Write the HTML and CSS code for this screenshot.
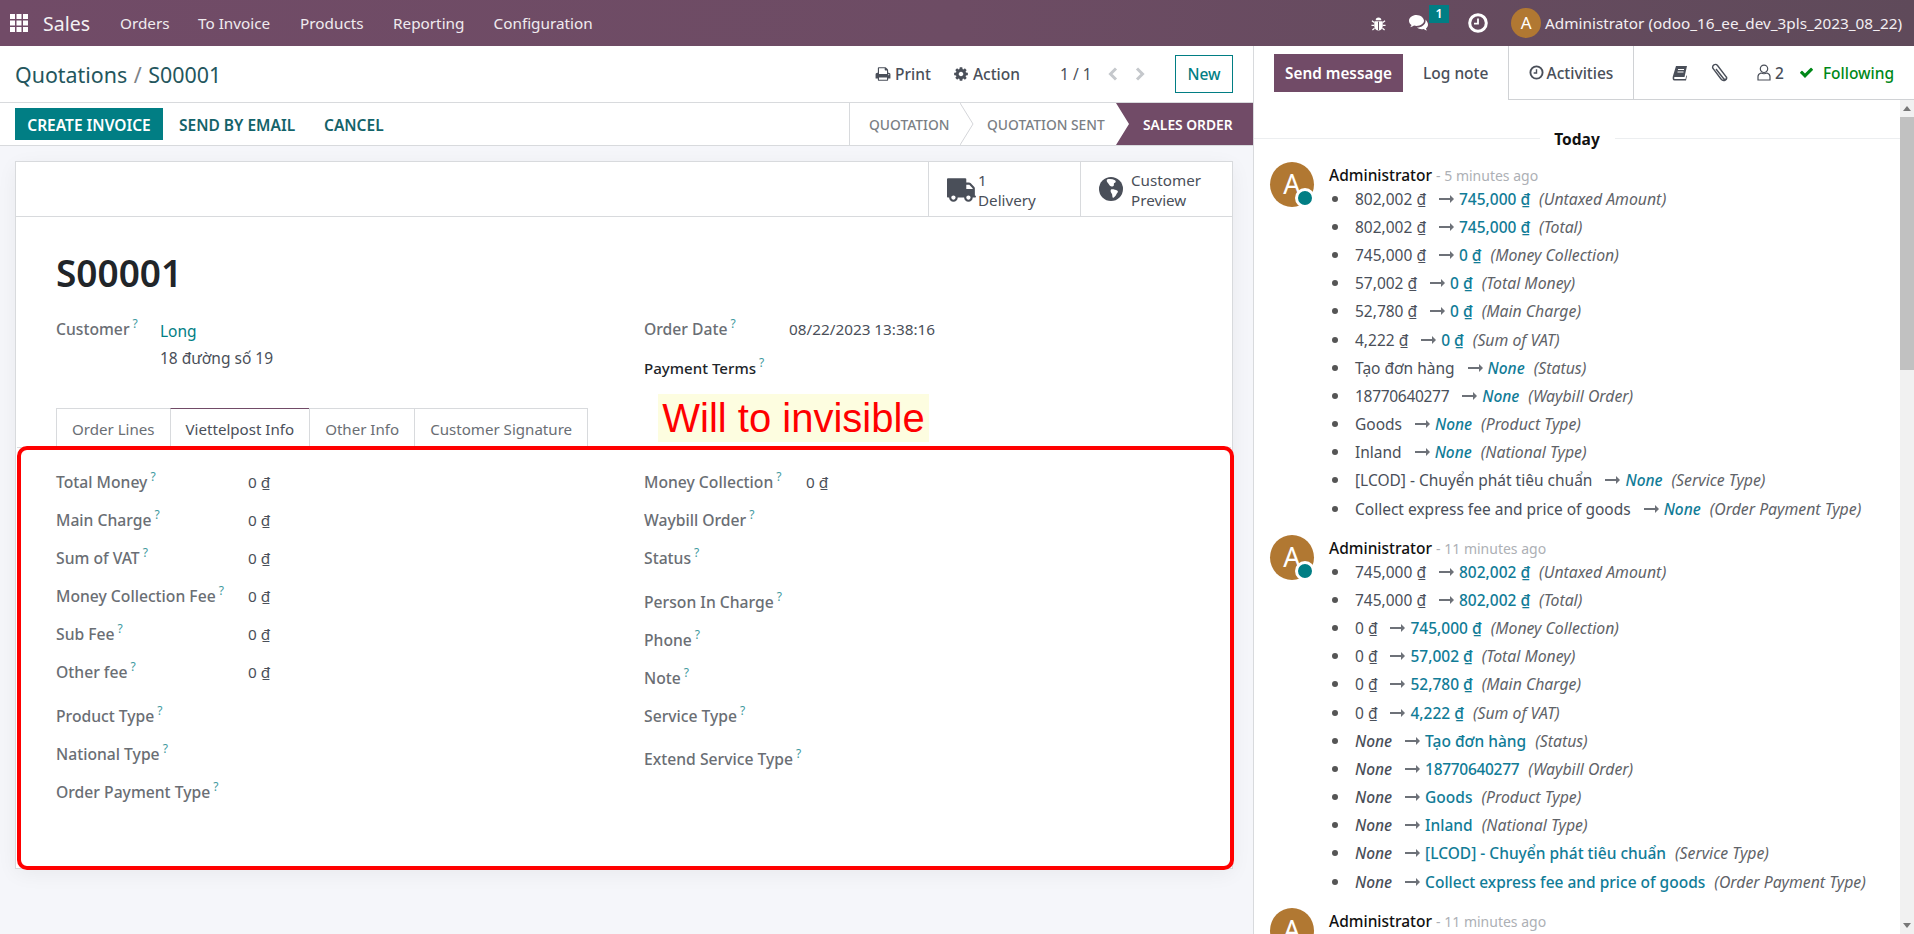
FILE: index.html
```html
<!DOCTYPE html>
<html lang="en">
<head>
<meta charset="utf-8">
<title>S00001 - Odoo</title>
<link rel="stylesheet" href="styles.css">
</head>
<body>
<header class="nav">
  <svg class="i-apps" viewBox="0 0 18 18"><g fill="#fff"><rect width="5" height="5"/><rect x="6.5" width="5" height="5"/><rect x="13" width="5" height="5"/><rect y="6.5" width="5" height="5"/><rect x="6.5" y="6.5" width="5" height="5"/><rect x="13" y="6.5" width="5" height="5"/><rect y="13" width="5" height="5"/><rect x="6.5" y="13" width="5" height="5"/><rect x="13" y="13" width="5" height="5"/></g></svg>
  <span class="brand">Sales</span>
  <a class="nav-a nav-orders">Orders</a>
  <a class="nav-a nav-inv">To Invoice</a>
  <a class="nav-a nav-prod">Products</a>
  <a class="nav-a nav-rep">Reporting</a>
  <a class="nav-a">Configuration</a>
  <div class="nav-right">
    <svg class="i-bug" viewBox="0 0 16 16"><path fill="#fff" d="M5 4.500a3 3 0 0 1 6 0zM4.400 5.500h7.200c.5 0 .9.4.9.9V11a4.500 4.500 0 0 1-9 0V6.400c0-.5.4-.9.9-.9z"/><path stroke="#fff" stroke-width="1.300" fill="none" d="M3.500 7 1 5M12.500 7 15 5M3.500 10H.5M12.500 10h3M3.800 13 1.500 15M12.200 13l2.300 2"/><path stroke="#604a5b" d="M8 6v9"/></svg>
    <span class="chat-wrap">
      <svg class="i-chat" viewBox="0 0 21 18"><path fill="#fff" d="M7.500 1C3.400 1 0 3.500 0 6.700c0 1.700 1 3.300 2.500 4.300-.3.900-.8 1.700-1.400 2.300 1.500-.2 2.900-.8 4-1.700.8.200 1.600.3 2.400.3 4.100 0 7.500-2.500 7.500-5.200S11.600 1 7.500 1z"/><path fill="#fff" d="M16.500 5.500c.1.400.1.800.1 1.200 0 3.800-3.800 6.700-8.600 6.900 1.200 1 2.900 1.600 4.700 1.600.7 0 1.400-.1 2-.2.9.8 2.100 1.300 3.300 1.500-.5-.6-.9-1.300-1.100-2 1.300-.9 2.100-2.200 2.100-3.700 0-2-1.200-3.600-2.500-5.300z"/></svg>
      <span class="badge">1</span>
    </span>
    <svg class="i-clock-nav" viewBox="0 0 20 20"><circle cx="10" cy="10" r="8.300" fill="none" stroke="#fff" stroke-width="3"/><path d="M10 5.500V10.700H6" fill="none" stroke="#fff" stroke-width="1.800"/></svg>
    <span class="nav-av">A</span>
    <span class="nav-user">Administrator (odoo_16_ee_dev_3pls_2023_08_22)</span>
  </div>
</header>

<div class="main">
  <section class="left">
    <div class="cp">
      <div class="crumb">Quotations <span class="sl">/</span> S00001</div>
      <div class="cp-actions">
        <span class="cp-btn"><svg class="i-sm" viewBox="0 0 1792 1792"><path fill="#4a4f59" d="M448 1536h896v-256h-896v256zm0-640h896v-384h-160q-40 0-68-28t-28-68v-160h-640v640zm1152 64q0-26-19-45t-45-19-45 19-19 45 19 45 45 19 45-19 19-45zm128 0v416q0 13-9.500 22.500t-22.500 9.500h-224v160q0 40-28 68t-68 28h-960q-40 0-68-28t-28-68v-160h-224q-13 0-22.500-9.500t-9.500-22.500v-416q0-79 56.500-135.500t135.500-56.500h64v-544q0-40 28-68t68-28h672q40 0 88 20t76 48l152 152q28 28 48 76t20 88v256h64q79 0 135.500 56.500t56.500 135.500z"/></svg>Print</span>
        <span class="cp-btn cp-action"><svg class="i-sm" viewBox="0 0 1792 1792"><path fill="#4a4f59" d="M1152 896q0-106-75-181t-181-75-181 75-75 181 75 181 181 75 181-75 75-181zm512-109v222q0 12-8 23t-20 13l-185 28q-19 54-39 91 35 50 107 138 10 12 10 25t-9 23q-27 37-99 108t-94 71q-12 0-26-9l-138-108q-44 23-91 38-16 136-29 186-7 28-36 28h-222q-14 0-24.500-8.500t-11.500-21.500l-28-184q-49-16-90-37l-141 107q-10 9-25 9-14 0-25-11-126-114-165-168-7-10-7-23 0-12 8-23 15-21 51-66.500t54-70.500q-27-50-41-99l-183-27q-13-2-21-12.500t-8-23.500v-222q0-12 8-23t19-13l186-28q14-46 39-92-40-57-107-138-10-12-10-24 0-10 9-23 26-36 98.500-107.500t94.500-71.500q13 0 26 10l138 107q44-23 91-38 16-136 29-186 7-28 36-28h222q14 0 24.500 8.500t11.500 21.500l28 184q49 16 90 37l142-107q9-9 24-9 13 0 25 10 129 119 165 170 7 8 7 22 0 12-8 23-15 21-51 66.500t-54 70.500q26 50 41 98l183 28q13 2 21 12.500t8 23.500z"/></svg>Action</span>
        <span class="pager">1 / 1</span>
        <svg class="i-chev" viewBox="0 0 10 14"><path d="M8 1.500 2.500 7 8 12.500" fill="none" stroke="#c5c8cc" stroke-width="3"/></svg>
        <svg class="i-chev i-chev-r" viewBox="0 0 10 14"><path d="M2 1.500 7.500 7 2 12.500" fill="none" stroke="#c5c8cc" stroke-width="3"/></svg>
        <span class="btn-new">New</span>
      </div>
    </div>

    <div class="sb">
      <span class="btn-primary">CREATE INVOICE</span>
      <span class="btn-link b-send">SEND BY EMAIL</span>
      <span class="btn-link b-cancel">CANCEL</span>
      <div class="status">
        <span class="st st-1">QUOTATION</span>
        <svg class="st-ch" viewBox="0 0 14 42"><path d="M0 0 13 21 0 42" fill="none" stroke="#d4d6d9"/></svg>
        <span class="st st-2">QUOTATION SENT</span>
        <span class="st-cur">SALES ORDER</span>
      </div>
    </div>

    <div class="form-view">
      <div class="sheet">
        <div class="btnbox">
          <div class="sbtn">
            <svg class="i-truck" viewBox="0 0 1792 1792"><path fill="#4a4f59" transform="matrix(-1 0 0 1 1792 0)" d="M640 1408q0-52-38-90t-90-38-90 38-38 90 38 90 90 38 90-38 38-90zm-384-512h384v-256h-158q-13 0-22 9l-195 195q-9 9-9 22v30zm1280 512q0-52-38-90t-90-38-90 38-38 90 38 90 90 38 90-38 38-90zm256-1088v1024q0 15-4 26.500t-13.500 18.500-16.500 11.500-23.500 6-22.500 2-25.500 0-22.500-.5q0 106-75 181t-181 75-181-75-75-181h-384q0 106-75 181t-181 75-181-75-75-181h-64q-3 0-22.500.5t-25.500 0-22.500-2-23.500-6-16.500-11.500-13.500-18.500-4-26.500q0-26 19-45t45-19v-320q0-8-.5-35t0-38 2.500-34.500 6.500-37 14-30.500 22.500-30l198-198q19-19 50.500-32t58.500-13h160v-192q0-26 19-45t45-19h1024q26 0 45 19t19 45z"/></svg>
            <span class="sbtn-t"><span>1</span><span>Delivery</span></span>
          </div>
          <div class="sbtn">
            <svg class="i-globe" viewBox="0 0 24 24"><circle cx="12" cy="12" r="12" fill="#4a4f59"/><path fill="#fff" d="M8 2.500c2.500-.8 5.500-.5 8 .8 1.500 1.200.5 2.700-1 2.900-.5 1.300.5 2.200-1 3-2 1-3.500-.8-4.500-2.500C8.500 5.500 7 4 8 2.500zM12 12.500c2-.5 4 .2 6.500 1.200 1 .8 0 2-1 3.200-.5 1.500-2 3.200-3.500 4-1-1.200-.5-2.800-1-4-1-1.200-2-2.800-1-4.400z"/></svg>
            <span class="sbtn-t"><span>Customer</span><span>Preview</span></span>
          </div>
        </div>
        <div class="sheet-body">
          <h1 class="title">S00001</h1>
          <div class="group">
            <div class="g-col">
              <div class="cust">
                <span class="lbl lbl-cust">Customer<sup>?</sup></span>
                <div class="cust-v"><a class="link">Long</a><span>18 đường số 19</span></div>
              </div>
            </div>
            <div class="g-col">
              <div class="row"><span class="lbl lbl-date">Order Date<sup>?</sup></span><span class="val">08/22/2023 13:38:16</span></div>
              <div class="row row-pay"><span class="lbl lbl-strong">Payment Terms<sup>?</sup></span></div>
            </div>
          </div>
          <ul class="tabs">
            <li class="tab">Order Lines</li>
            <li class="tab tab-on">Viettelpost Info</li>
            <li class="tab">Other Info</li>
            <li class="tab">Customer Signature</li>
          </ul>
          <div class="group tab-pane">
            <div class="g-col">
              <div class="row"><span class="lbl lbl-w">Total Money<sup>?</sup></span><span class="val">0 ₫</span></div>
              <div class="row"><span class="lbl lbl-w">Main Charge<sup>?</sup></span><span class="val">0 ₫</span></div>
              <div class="row"><span class="lbl lbl-w">Sum of VAT<sup>?</sup></span><span class="val">0 ₫</span></div>
              <div class="row"><span class="lbl lbl-w">Money Collection Fee<sup>?</sup></span><span class="val">0 ₫</span></div>
              <div class="row"><span class="lbl lbl-w">Sub Fee<sup>?</sup></span><span class="val">0 ₫</span></div>
              <div class="row"><span class="lbl lbl-w">Other fee<sup>?</sup></span><span class="val">0 ₫</span></div>
              <div class="row row-gap6"><span class="lbl lbl-w">Product Type<sup>?</sup></span></div>
              <div class="row"><span class="lbl lbl-w">National Type<sup>?</sup></span></div>
              <div class="row"><span class="lbl lbl-w">Order Payment Type<sup>?</sup></span></div>
            </div>
            <div class="g-col">
              <div class="row"><span class="lbl lbl-mc">Money Collection<sup>?</sup></span><span class="val">0 ₫</span></div>
              <div class="row"><span class="lbl">Waybill Order<sup>?</sup></span></div>
              <div class="row"><span class="lbl">Status<sup>?</sup></span></div>
              <div class="row row-gap6"><span class="lbl">Person In Charge<sup>?</sup></span></div>
              <div class="row"><span class="lbl">Phone<sup>?</sup></span></div>
              <div class="row"><span class="lbl">Note<sup>?</sup></span></div>
              <div class="row"><span class="lbl">Service Type<sup>?</sup></span></div>
              <div class="row row-gap5"><span class="lbl">Extend Service Type<sup>?</sup></span></div>
            </div>
          </div>
        </div>
      </div>
      <div class="anno-box"></div>
      <div class="anno-text">Will to invisible</div>
    </div>
  </section>

  <aside class="chatter">
    <div class="ch-top">
      <div class="ch-tabs">
        <span class="send">Send message</span>
        <span class="lognote">Log note</span>
      </div>
      <div class="ch-act"><svg class="i-clk" viewBox="0 0 16 16"><circle cx="8" cy="8" r="6.500" fill="none" stroke="#4a4f59" stroke-width="2"/><path d="M8 4.500V8.500H5" fill="none" stroke="#4a4f59" stroke-width="1.500"/></svg>Activities</div>
      <div class="ch-tools">
        <svg class="i-book" viewBox="0 0 16 16"><path fill="#4a4f59" d="M4 1h11l-2.500 11H2.800c-.9 0-.9 2 0 2h10.700l.8-3.500.7.300-1 4.700H2.500C.6 15.500.4 13.500.8 11.500zM6 4v1h6V4zM5.500 6.500v1h6v-1z"/></svg>
        <svg class="i-clip" viewBox="0 0 18 20"><path fill="none" stroke="#4a4f59" stroke-width="1.400" d="M5 6l7.500 9.500c1.500 2 4 .3 2.700-1.700L6.500 2.500C4.500 0 .5 2.300 2 5.500l8 10.500c2.300 3 6.500 1 5.500-2"/></svg>
        <svg class="i-user" viewBox="0 0 14 17"><circle cx="7" cy="4.800" r="3.700" fill="none" stroke="#4a4f59" stroke-width="1.200"/><path d="M1 16v-3.500C1 10.500 2.500 9.500 4 9c2 1 4 1 6 0 1.500.5 3 1.500 3 3.500V16z" fill="none" stroke="#4a4f59" stroke-width="1.200"/></svg>
        <span class="cnt">2</span>
        <svg class="i-check" viewBox="0 0 1792 1792"><path fill="#008818" d="M1671 566q0 40-28 68l-724 724-136 136q-28 28-68 28t-68-28l-136-136-362-362q-28-28-28-68t28-68l136-136q28-28 68-28t68 28l294 295 656-657q28-28 68-28t68 28l136 136q28 28 28 68z"/></svg>
        <span class="following">Following</span>
      </div>
    </div>
    <div class="ch-body">
      <div class="ch-scroll">
        <div class="today"><span>Today</span></div>

        <article class="msg">
          <div class="av">A<i></i></div>
          <div class="msg-c">
            <div class="who"><b>Administrator</b> <span>- 5 minutes ago</span></div>
            <ul class="tr">
              <li><span>802,002 ₫</span><svg class="arr" viewBox="0 0 15 8"><path d="M0 3h11V0l4 4-4 4V5H0z"/></svg><em>745,000 ₫</em><i>(Untaxed Amount)</i></li>
              <li><span>802,002 ₫</span><svg class="arr" viewBox="0 0 15 8"><path d="M0 3h11V0l4 4-4 4V5H0z"/></svg><em>745,000 ₫</em><i>(Total)</i></li>
              <li><span>745,000 ₫</span><svg class="arr" viewBox="0 0 15 8"><path d="M0 3h11V0l4 4-4 4V5H0z"/></svg><em>0 ₫</em><i>(Money Collection)</i></li>
              <li><span>57,002 ₫</span><svg class="arr" viewBox="0 0 15 8"><path d="M0 3h11V0l4 4-4 4V5H0z"/></svg><em>0 ₫</em><i>(Total Money)</i></li>
              <li><span>52,780 ₫</span><svg class="arr" viewBox="0 0 15 8"><path d="M0 3h11V0l4 4-4 4V5H0z"/></svg><em>0 ₫</em><i>(Main Charge)</i></li>
              <li><span>4,222 ₫</span><svg class="arr" viewBox="0 0 15 8"><path d="M0 3h11V0l4 4-4 4V5H0z"/></svg><em>0 ₫</em><i>(Sum of VAT)</i></li>
              <li><span>Tạo đơn hàng</span><svg class="arr" viewBox="0 0 15 8"><path d="M0 3h11V0l4 4-4 4V5H0z"/></svg><em class="none">None</em><i>(Status)</i></li>
              <li><span class="digits">18770640277</span><svg class="arr" viewBox="0 0 15 8"><path d="M0 3h11V0l4 4-4 4V5H0z"/></svg><em class="none">None</em><i>(Waybill Order)</i></li>
              <li><span>Goods</span><svg class="arr" viewBox="0 0 15 8"><path d="M0 3h11V0l4 4-4 4V5H0z"/></svg><em class="none">None</em><i>(Product Type)</i></li>
              <li><span>Inland</span><svg class="arr" viewBox="0 0 15 8"><path d="M0 3h11V0l4 4-4 4V5H0z"/></svg><em class="none">None</em><i>(National Type)</i></li>
              <li><span>[LCOD] - Chuyển phát tiêu chuẩn</span><svg class="arr" viewBox="0 0 15 8"><path d="M0 3h11V0l4 4-4 4V5H0z"/></svg><em class="none">None</em><i>(Service Type)</i></li>
              <li><span>Collect express fee and price of goods</span><svg class="arr" viewBox="0 0 15 8"><path d="M0 3h11V0l4 4-4 4V5H0z"/></svg><em class="none">None</em><i>(Order Payment Type)</i></li>
            </ul>
          </div>
        </article>

        <article class="msg">
          <div class="av">A<i></i></div>
          <div class="msg-c">
            <div class="who"><b>Administrator</b> <span>- 11 minutes ago</span></div>
            <ul class="tr">
              <li><span>745,000 ₫</span><svg class="arr" viewBox="0 0 15 8"><path d="M0 3h11V0l4 4-4 4V5H0z"/></svg><em>802,002 ₫</em><i>(Untaxed Amount)</i></li>
              <li><span>745,000 ₫</span><svg class="arr" viewBox="0 0 15 8"><path d="M0 3h11V0l4 4-4 4V5H0z"/></svg><em>802,002 ₫</em><i>(Total)</i></li>
              <li><span>0 ₫</span><svg class="arr" viewBox="0 0 15 8"><path d="M0 3h11V0l4 4-4 4V5H0z"/></svg><em>745,000 ₫</em><i>(Money Collection)</i></li>
              <li><span>0 ₫</span><svg class="arr" viewBox="0 0 15 8"><path d="M0 3h11V0l4 4-4 4V5H0z"/></svg><em>57,002 ₫</em><i>(Total Money)</i></li>
              <li><span>0 ₫</span><svg class="arr" viewBox="0 0 15 8"><path d="M0 3h11V0l4 4-4 4V5H0z"/></svg><em>52,780 ₫</em><i>(Main Charge)</i></li>
              <li><span>0 ₫</span><svg class="arr" viewBox="0 0 15 8"><path d="M0 3h11V0l4 4-4 4V5H0z"/></svg><em>4,222 ₫</em><i>(Sum of VAT)</i></li>
              <li><span class="none">None</span><svg class="arr" viewBox="0 0 15 8"><path d="M0 3h11V0l4 4-4 4V5H0z"/></svg><em>Tạo đơn hàng</em><i>(Status)</i></li>
              <li><span class="none">None</span><svg class="arr" viewBox="0 0 15 8"><path d="M0 3h11V0l4 4-4 4V5H0z"/></svg><em class="digits">18770640277</em><i>(Waybill Order)</i></li>
              <li><span class="none">None</span><svg class="arr" viewBox="0 0 15 8"><path d="M0 3h11V0l4 4-4 4V5H0z"/></svg><em>Goods</em><i>(Product Type)</i></li>
              <li><span class="none">None</span><svg class="arr" viewBox="0 0 15 8"><path d="M0 3h11V0l4 4-4 4V5H0z"/></svg><em>Inland</em><i>(National Type)</i></li>
              <li><span class="none">None</span><svg class="arr" viewBox="0 0 15 8"><path d="M0 3h11V0l4 4-4 4V5H0z"/></svg><em>[LCOD] - Chuyển phát tiêu chuẩn</em><i>(Service Type)</i></li>
              <li><span class="none">None</span><svg class="arr" viewBox="0 0 15 8"><path d="M0 3h11V0l4 4-4 4V5H0z"/></svg><em>Collect express fee and price of goods</em><i>(Order Payment Type)</i></li>
            </ul>
          </div>
        </article>

        <article class="msg">
          <div class="av">A<i></i></div>
          <div class="msg-c">
            <div class="who"><b>Administrator</b> <span>- 11 minutes ago</span></div>
          </div>
        </article>
      </div>
      <div class="scrollbar">
        <svg class="sb-up" viewBox="0 0 8 5"><path d="M4 0 8 5H0z"/></svg>
        <div class="thumb"></div>
        <svg class="sb-down" viewBox="0 0 8 5"><path d="M0 0h8L4 5z"/></svg>
      </div>
    </div>
  </aside>
</div>
</body>
</html>
```
FILE: styles.css
```css
* { box-sizing: border-box; }
html, body { margin: 0; height: 934px; overflow: hidden; }
body { font-family: "Noto Sans", sans-serif; font-size: 15.5px; color: #4a4f59; background: #fff; }
svg { display: block; flex: none; }

/* top navbar */
.nav { height: 46px; display: flex; align-items: center; color: #fff; padding-left: 10px; font-size: 15.3px;
  background: linear-gradient(90deg, #714b67 0%, #6d4c64 50%, #5f4a5a 100%); }
.i-apps { width: 18px; height: 18px; margin-right: 15px; }
.brand { font-size: 19.500px; width: 77px; opacity: .92; }
.nav-a { color: #f0ebef; }
.nav-orders { width: 78px; }
.nav-inv { width: 102px; }
.nav-prod { width: 93px; }
.nav-rep { width: 100.500px; }
.nav-right { margin-left: auto; display: flex; align-items: center; padding-right: 12px; }
.i-bug { width: 15px; height: 15px; margin-right: 23px; }
.chat-wrap { position: relative; display: block; width: 21px; height: 18px; margin-right: 38px; }
.i-chat { width: 21px; height: 18px; }
.badge { position: absolute; left: 20px; top: -9px; width: 20px; height: 18px; background: #017e84; color: #fff;
  font-size: 12.500px; font-weight: 600; line-height: 18px; text-align: center; }
.i-clock-nav { width: 20px; height: 20px; margin-right: 23px; }
.nav-av { width: 30px; height: 30px; border-radius: 50%; background: #b17832; text-align: center; line-height: 30px; font-size: 17px; margin-right: 4px; }
.nav-user { color: #f3eff2; }

.main { display: flex; height: 888px; }

/* left pane */
.left { width: 1254px; border-right: 1px solid #d8dadd; display: flex; flex-direction: column; background: #f5f6fa; }
.cp { height: 57px; background: #fff; border-bottom: 1px solid #d8dadd; display: flex; align-items: center; padding: 0 20px 0 15px; }
.crumb { font-size: 21.400px; color: #24565d; }
.sl { color: #7d8287; margin: 0 1px; }
.cp-actions { margin-left: auto; display: flex; align-items: center; }
.cp-btn { display: flex; align-items: center; font-weight: 500; color: #4a4f59; }
.i-sm { width: 16px; height: 16px; margin-right: 4px; }
.cp-action { margin-left: 22px; }
.pager { margin-left: 40px; color: #4a4f59; width: 48px; }
.i-chev { width: 10px; height: 14px; }
.i-chev-r { margin-left: 17px; }
.btn-new { margin-left: 30px; width: 58px; height: 38px; border: 1px solid #017e84; color: #017e84; font-weight: 500;
  display: flex; align-items: center; justify-content: center; }

.sb { height: 43px; background: #fff; border-bottom: 1px solid #d8dadd; display: flex; align-items: center; padding-left: 15px; font-weight: 600; font-size: 15.500px; }
.btn-primary { width: 148px; height: 32px; background: #017e84; color: #fff; display: flex; align-items: center; justify-content: center; padding-top: 2px; }
.btn-link { color: #14636a; padding-top: 2px; }
.b-send { margin-left: 16px; width: 145px; }
.status { margin-left: auto; height: 42px; display: flex; align-items: center; border-left: 1px solid #d8dadd; font-size: 13.800px; font-weight: 500; color: #7b7f85; }
.st-1 { margin-left: 19px; width: 91px; }
.st-ch { width: 14px; height: 42px; }
.st-2 { margin-left: 13px; width: 129px; }
.st-cur { width: 137px; height: 42px; background: #714b67; color: #fff; font-weight: 600; display: flex; align-items: center; padding-left: 27px;
  clip-path: polygon(0 0, 100% 0, 100% 100%, 0 100%, 13px 50%); }

.form-view { position: relative; flex: 1; padding: 15px 0 0 15px; }
.sheet { width: 1218px; height: 708px; background: #fff; border: 1px solid #d8dadd; box-shadow: 0 5px 20px -1px rgba(0,0,0,.06); }
.btnbox { height: 55px; border-bottom: 1px solid #d8dadd; display: flex; justify-content: flex-end; }
.sbtn { width: 152px; border-left: 1px solid #d8dadd; display: flex; align-items: center; padding-left: 18px; font-size: 15.200px; }
.i-truck { width: 30px; height: 30px; }
.i-globe { width: 24px; height: 24px; margin-right: 7px; }
.sbtn-t { display: flex; flex-direction: column; line-height: 20px; margin-left: 1px; padding-top: 2px; }
.sheet-body { padding: 0 40px; }
.title { margin: 32px 0 0; height: 48px; font-size: 37px; line-height: 48px; font-weight: 600; color: #212529; }
.group { display: grid; grid-template-columns: 588px 1fr; margin-top: 13px; height: 98px; }
.g-col { display: flex; flex-direction: column; }
.cust { display: flex; }
.lbl { color: #6a6e74; font-weight: 500; display: block; font-size: 15.700px; }
.lbl sup { color: #3f9aa0; font-size: 12px; font-weight: 400; margin-left: 3px; line-height: 0; vertical-align: 7px; }
.lbl-cust { width: 104px; padding-top: 8px; }
.cust-v { display: flex; flex-direction: column; padding-top: 8px; line-height: 27px; color: #4a4f59; }
.link { color: #017e84; }
.row { height: 38px; display: flex; align-items: center; }
.row-pay { margin-top: 1px; }
.lbl-date { width: 145px; }
.lbl-w { width: 192px; }
.lbl-mc { width: 162px; }
.lbl-strong { color: #212529; font-size: 15.100px; }
.val { color: #4a4f59; font-size: 15.300px; }
.row-gap6 { margin-top: 6px; }
.row-gap5 { margin-top: 5px; }
.tabs { list-style: none; margin: 0 -39px; padding: 0 39px; display: flex; height: 40px; border-bottom: 1px solid #d8dadd; font-size: 15.100px; }
.tab { padding: 0 15px; height: 40px; line-height: 40px; border: 1px solid #d8dadd; margin-left: -1px; color: #6a6e74; background: #fff; white-space: nowrap; }
.tab:first-child { margin-left: 0; }
.tab-on { border-top-color: #714b67; color: #4a4f59; border-bottom-color: #fff; }
.tab-pane { margin-top: 15px; height: auto; }

.anno-box { position: absolute; left: 17px; top: 300px; width: 1217px; height: 424px; border: 4px solid #f00; border-radius: 10px; }
.anno-text { position: absolute; left: 658px; top: 248px; width: 271px; height: 48px; background: #fdfde0; color: #f00; font-family: "Liberation Sans", sans-serif; font-size: 40px; line-height: 48px; text-align: center; white-space: nowrap; }

/* chatter */
.chatter { width: 660px; display: flex; flex-direction: column; background: #fff; }
.ch-top { height: 54px; display: flex; }
.ch-tabs { width: 254px; display: flex; padding: 8px 0 0 20px; }
.send { width: 129px; height: 38px; background: #714b67; color: #fff; font-weight: 600; font-size: 15.300px; display: flex; align-items: center; justify-content: center; }
.lognote { margin-left: 20px; height: 38px; line-height: 38px; color: #4a4f59; font-weight: 500; }
.ch-act { width: 126px; border-left: 1px solid #d0d2d5; border-right: 1px solid #d0d2d5; border-bottom: 1px solid #d0d2d5; display: flex; align-items: center; justify-content: center; font-weight: 500; }
.i-clk { width: 15px; height: 15px; margin-right: 3px; }
.ch-tools { flex: 1; border-bottom: 1px solid #d0d2d5; display: flex; align-items: center; padding-left: 38px; }
.i-book { width: 16px; height: 16px; }
.i-clip { width: 18px; height: 20px; margin-left: 23px; }
.i-user { width: 14px; height: 17px; margin-left: 28px; }
.cnt { margin-left: 4px; font-weight: 500; }
.i-check { width: 15px; height: 15px; margin-left: 15px; }
.following { margin-left: 9px; color: #008818; font-weight: 500; }
.ch-body { flex: 1; display: flex; min-height: 0; }
.ch-scroll { flex: 1; overflow: hidden; padding-top: 24px; }
.today { height: 28px; display: flex; align-items: center; color: #111; font-weight: 700; font-size: 15.500px; }
.today::before, .today::after { content: ""; flex: 1; height: 1px; background: #eceef0; }
.today span { width: 75px; text-align: center; padding-top: 2px; }
.msg { display: flex; margin-top: 10px; padding-left: 16px; height: 363px; }
.av { position: relative; width: 44px; height: 45px; border-radius: 50%; background: #b17832; color: #fff; font-size: 27px; line-height: 44px; text-align: center; margin-right: 15px; }
.av i { position: absolute; right: -1px; bottom: -1px; width: 20px; height: 20px; border-radius: 50%; background: #017e84; border: 3px solid #fff; }
.msg-c { flex: 1; }
.who { line-height: 27px; margin-bottom: -4.500px; white-space: nowrap; }
.who b { font-weight: 500; color: #111; }
.who span { color: #adb0b5; font-size: 14px; }
.tr { list-style: none; margin: 0; padding: 0; }
.tr li { height: 28.200px; display: flex; align-items: center; padding-left: 3px; white-space: nowrap; }
.tr li::before { content: ""; width: 6px; height: 6px; border-radius: 50%; background: #555; margin-right: 17px; flex: none; }
.arr { width: 15px; height: 8px; margin: 0 5px 0 13px; fill: #6d7178; }
.tr em { font-style: normal; font-weight: 500; color: #117c97; }
.tr i { margin-left: 9px; color: #5f6368; font-size: 15.800px; }
.tr .none { font-style: italic; font-weight: 500; }
.tr .digits { letter-spacing: -.3px; }
.scrollbar { width: 14px; background: #f1f1f1; display: flex; flex-direction: column; align-items: center; padding-top: 6px; }
.sb-up, .sb-down { width: 8px; height: 5px; fill: #777; }
.sb-up { margin-bottom: 6px; }
.thumb { width: 100%; height: 253px; background: #c1c1c1; }
.sb-down { margin-top: auto; margin-bottom: 6px; }
```
